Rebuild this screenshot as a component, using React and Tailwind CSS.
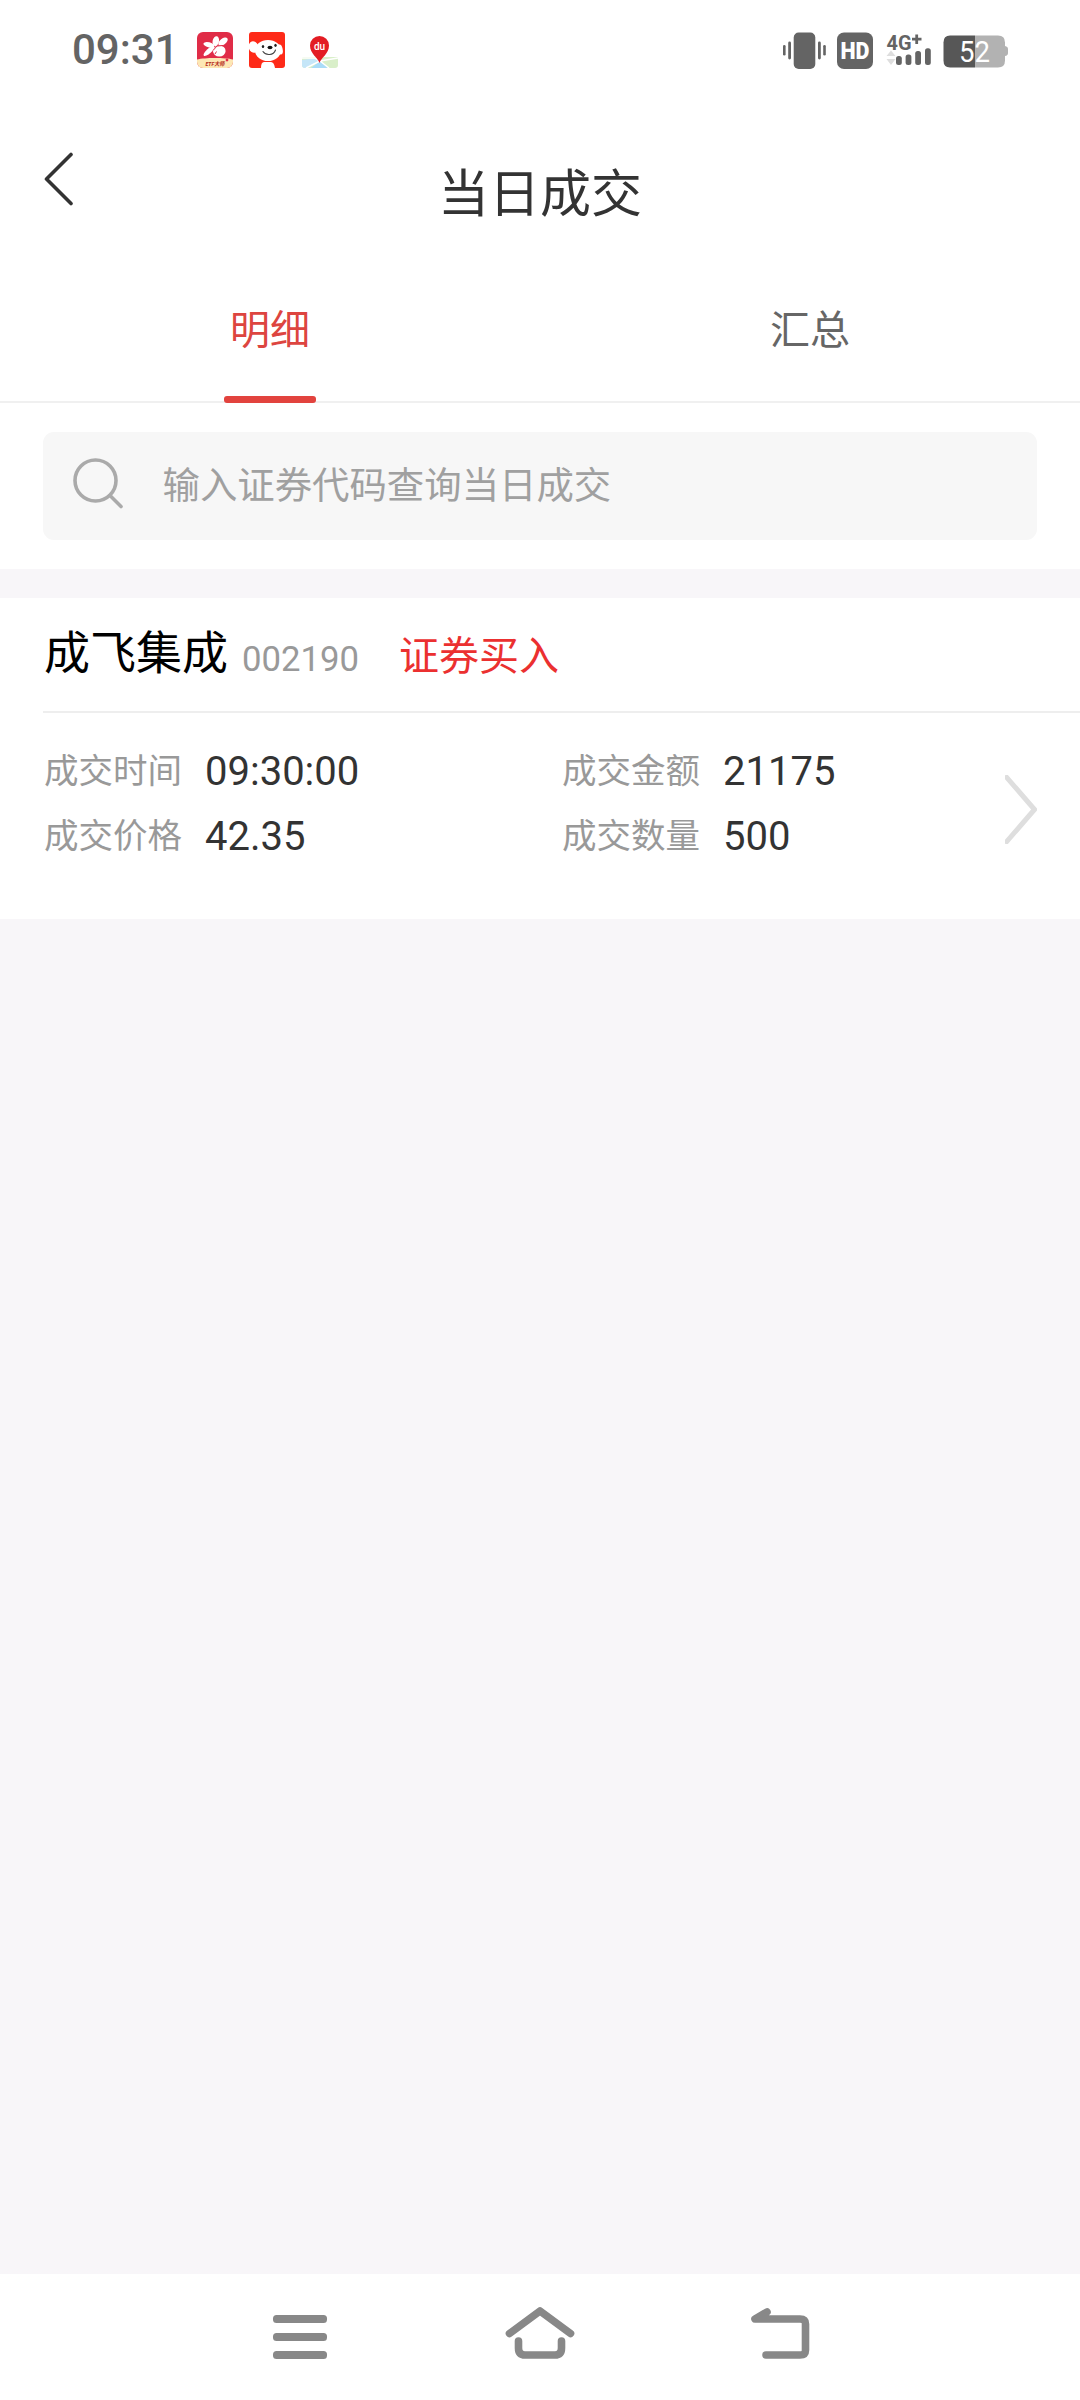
const TABS = [
  { name: "明细", active: true },
  { name: "汇总", active: false },
];

const TRADE = {
  name: "成飞集成",
  code: "002190",
  side: "证券买入",
  fields: [
    { label: "成交时间", value: "09:30:00" },
    { label: "成交金额", value: "21175" },
    { label: "成交价格", value: "42.35" },
    { label: "成交数量", value: "500" },
  ],
};

function OrchidAppIcon() {
  return (
    <svg width="36" height="36" viewBox="0 0 36 36">
      <defs>
        <clipPath id="orchid-clip">
          <rect width="36" height="36" rx="6" />
        </clipPath>
      </defs>
      <g clipPath="url(#orchid-clip)">
        <rect width="36" height="36" fill="#e02c47" />
        <path d="M0 27.500C8 25.500 28 25.500 36 27.500V36H0Z" fill="#fde7b4" />
        <g fill="#fff">
          <ellipse cx="18.800" cy="9.200" rx="3.200" ry="5" transform="rotate(12 18.800 9.200)" />
          <ellipse cx="26" cy="9.600" rx="5.500" ry="3" transform="rotate(-38 26 9.600)" />
          <ellipse cx="11.800" cy="12.800" rx="5.500" ry="2.500" transform="rotate(14 11.800 12.800)" />
          <ellipse cx="12" cy="19" rx="7" ry="2.400" transform="rotate(-42 12 19)" />
          <ellipse cx="22.300" cy="19" rx="6.300" ry="5.500" />
        </g>
        <path d="M16 18.500L20 14L26 13.500" fill="none" stroke="#e02c47" strokeWidth="1" />
        <path d="M19.500 19.500L18 22" stroke="#e02c47" strokeWidth="1" />
        <text x="18" y="34" fontSize="6" fontWeight="700" fontStyle="italic" textAnchor="middle" textLength="19" lengthAdjust="spacingAndGlyphs" fill="#b52818">ETF大师</text>
        <circle cx="30" cy="28" r="1.400" fill="#e02c47" />
      </g>
    </svg>
  );
}

function DogAppIcon() {
  return (
    <svg width="36" height="36" viewBox="0 0 36 36">
      <rect width="36" height="36" rx="3" fill="#fe2a18" />
      <g fill="#fff">
        <ellipse cx="19" cy="18.500" rx="13" ry="10.500" />
        <ellipse cx="4.500" cy="15" rx="4.800" ry="5.800" transform="rotate(-18 4.500 15)" />
        <ellipse cx="31" cy="17.500" rx="2.700" ry="5" transform="rotate(-12 31 17.500)" />
        <path d="M12 36Q12 30 15 30H22Q25 30 26 36Z" />
      </g>
      <ellipse cx="14" cy="14.500" rx="1.200" ry="1.600" fill="#222" />
      <ellipse cx="26.500" cy="13.300" rx="1.200" ry="1.600" fill="#222" />
      <ellipse cx="21" cy="15.500" rx="2.500" ry="1.700" fill="#111" />
      <path d="M14 19.500C17 24 24.500 23.500 26.500 18" fill="none" stroke="#444" strokeWidth="1.100" strokeLinecap="round" />
    </svg>
  );
}

function MapAppIcon() {
  return (
    <svg width="36" height="36" viewBox="0 0 36 36">
      <path d="M1 25H35Q36 25 36 27V33Q36 36 33 36H3Q0 36 0 33V27Q0 25 1 25Z" fill="#d9efc9" />
      <path d="M0 28L14 26L18 29L4 36H3Q0 36 0 33Z" fill="#c5e6f8" />
      <path d="M18 29L26 36H9Z" fill="#a9dcf8" />
      <path d="M0 26H13L18 29L27 36M18 29L4 36M18 29L36 26" fill="none" stroke="#fff" strokeWidth="1.500" />
      <path d="M17.500 31C16 25.500 8 22 8 13.500A9.500 9.500 0 0 1 27 13.500C27 22 19 25.500 17.500 31Z" fill="#e31c23" />
      <text x="17.500" y="17.500" fontSize="10" fontWeight="500" textAnchor="middle" fill="#fff">du</text>
    </svg>
  );
}

function SystemIcons() {
  return (
    <svg width="228" height="40" viewBox="0 0 228 40" fill="#646464">
      <rect x="3" y="15" width="2.600" height="10.500" rx="1.300" />
      <rect x="8.200" y="11.500" width="2.800" height="18" rx="1.400" />
      <rect x="13.700" y="2.500" width="21.600" height="36.500" rx="5" />
      <rect x="38" y="11.500" width="2.800" height="18" rx="1.400" />
      <rect x="43.200" y="15" width="2.600" height="10.500" rx="1.300" />

      <rect x="57" y="2.500" width="36" height="36.500" rx="7" />
      <text x="75" y="29" fontSize="23" fontWeight="900" textAnchor="middle" textLength="29" lengthAdjust="spacingAndGlyphs" fill="#fff">HD</text>

      <text x="106.500" y="19.500" fontSize="20.500" fontWeight="700" textLength="25" lengthAdjust="spacingAndGlyphs">4G</text>
      <path d="M132 9.200H141.500M136.700 4.500V14" stroke="#646464" strokeWidth="2.800" />
      <path d="M106.500 26L111 20.500L115.500 26ZM106.500 29L111 35L115.500 29Z" fill="#dedede" />
      <rect x="116" y="26" width="5.800" height="9" rx="2.500" />
      <rect x="125.600" y="24.500" width="5.800" height="10.500" rx="2.500" />
      <rect x="135.200" y="21" width="5.800" height="14" rx="2.500" />
      <rect x="145" y="18.300" width="5.800" height="16.700" rx="2.500" />

      <path d="M195 5.500H218Q225 5.500 225 12.500V16Q228 16.500 228 19V23Q228 25.500 225 26V30.500Q225 37.500 218 37.500H195Z" fill="#b2b2b2" />
      <path d="M195 5.500H170Q163.500 5.500 163.500 12.500V30.500Q163.500 37.500 170 37.500H195Z" fill="#575757" />
      <text x="194.500" y="31.500" fontSize="29" textAnchor="middle" textLength="31" lengthAdjust="spacingAndGlyphs" fill="#fff">52</text>
    </svg>
  );
}

function StatusBar() {
  return (
    <div className="flex h-25 items-start justify-between pt-[30px] pr-[72px] pl-[72px]">
      <div className="flex items-start">
        <span className="w-[124.500px] text-[42px] leading-10 font-medium text-[#646464]">09:31</span>
        <div className="flex gap-[16.500px] pt-[2px]">
          <OrchidAppIcon />
          <DogAppIcon />
          <MapAppIcon />
        </div>
      </div>
      <SystemIcons />
    </div>
  );
}

function Header() {
  return (
    <header className="grid h-[180px] grid-cols-3">
      <svg className="mt-[51.500px] ml-[43px]" width="32" height="54" viewBox="0 0 32 54" fill="none" stroke="#333" strokeWidth="3.600" strokeLinecap="round" strokeLinejoin="round">
        <path d="M28 2.500L3.500 27L28 51.500" />
      </svg>
      <h1 className="mt-[65px] text-center text-[51px] leading-[60px] text-[#333]">当日成交</h1>
    </header>
  );
}

function Tabs() {
  return (
    <nav className="flex h-[123px] border-b-2 border-[#f0f0f0]">
      {TABS.map((tab) => (
        <div key={tab.name} className="flex flex-1 flex-col items-center justify-between pt-[26px]">
          <span className={`text-[40px] leading-[50px] ${tab.active ? "text-[#dd4540]" : "text-[#666]"}`}>{tab.name}</span>
          {tab.active && <div className="-mb-[2px] h-[7px] w-[92px] rounded-[3px] bg-[#e2433e]" />}
        </div>
      ))}
    </nav>
  );
}

function SearchBox() {
  return (
    <div className="h-[166px] px-[43px] pt-[29px]">
      <div className="flex h-[108px] items-center rounded-[11px] bg-[#f7f7f7] pl-[29px]">
        <svg className="mb-[6px]" width="52" height="52" viewBox="0 0 52 52" fill="none" stroke="#aaa" strokeWidth="3.600" strokeLinecap="round">
          <circle cx="23.500" cy="23.500" r="20.500" />
          <path d="M38 38.500L49 49.500" />
        </svg>
        <span className="mb-px ml-[38.500px] text-[37.400px] leading-[50px] text-[#a0a0a0]">输入证券代码查询当日成交</span>
      </div>
    </div>
  );
}

function TradeCard() {
  return (
    <section className="h-[321px] bg-white">
      <div className="ml-[43px] flex h-[115px] items-start border-b-2 border-[#eee] pt-[25px] pl-px">
        <span className="text-[46px] leading-[60px] text-black">{TRADE.name}</span>
        <span className="ml-[14px] pt-[6px] text-[34.700px] leading-[60px] text-[#999]">{TRADE.code}</span>
        <span className="ml-[40px] pt-[4px] text-[40px] leading-[60px] text-[#eb3030]">{TRADE.side}</span>
      </div>
      <div className="flex pt-[33px] pr-[43px] pl-[44px]">
        <div className="grid flex-1 grid-cols-[518px_1fr]">
          {TRADE.fields.map((field) => (
            <div key={field.label} className="flex h-[65px] items-start">
              <span className="w-[161px] text-[34.500px] leading-[50px] text-[#999]">{field.label}</span>
              <span className="pt-px text-[40px] leading-[50px] text-[#333]">{field.value}</span>
            </div>
          ))}
        </div>
        <svg className="mt-[29px]" width="32" height="69" viewBox="0 0 32 69" fill="none" stroke="#dedede" strokeWidth="5">
          <path d="M0 0.500L29.500 34.500L0 68.500" />
        </svg>
      </div>
    </section>
  );
}

function NavBar() {
  return (
    <footer className="flex h-[126px] items-start justify-center gap-[175px] bg-white pt-[31px]">
      <svg width="60" height="56" viewBox="0 0 60 56" fill="#888">
        <rect x="3" y="10" width="54" height="8" rx="3.500" />
        <rect x="3" y="28" width="54" height="8" rx="3.500" />
        <rect x="3" y="46" width="54" height="8" rx="3.500" />
      </svg>
      <svg width="70" height="56" viewBox="0 0 70 56" fill="none" stroke="#888" strokeWidth="7.600" strokeLinecap="round" strokeLinejoin="round">
        <path d="M4.500 28.500L35 6L65.500 28.500" />
        <path d="M13.500 36V43Q13.500 50 20 50H50Q56.500 50 56.500 43V36" />
      </svg>
      <svg width="60" height="56" viewBox="0 0 60 56" fill="none" stroke="#888" strokeWidth="7.600" strokeLinecap="round" strokeLinejoin="round">
        <path d="M17 7L5 14H50Q55.500 14 55.500 19V45Q55.500 50 50 50H16" />
      </svg>
    </footer>
  );
}

export default function App() {
  return (
    <div className="flex h-[2400px] w-[1080px] flex-col bg-[#f8f6f9] font-['Roboto','Noto_Sans_CJK_SC',sans-serif]">
      <div className="bg-white">
        <StatusBar />
        <Header />
        <Tabs />
        <SearchBox />
      </div>
      <main className="flex-1 pt-[29px]">
        <TradeCard />
      </main>
      <NavBar />
    </div>
  );
}
